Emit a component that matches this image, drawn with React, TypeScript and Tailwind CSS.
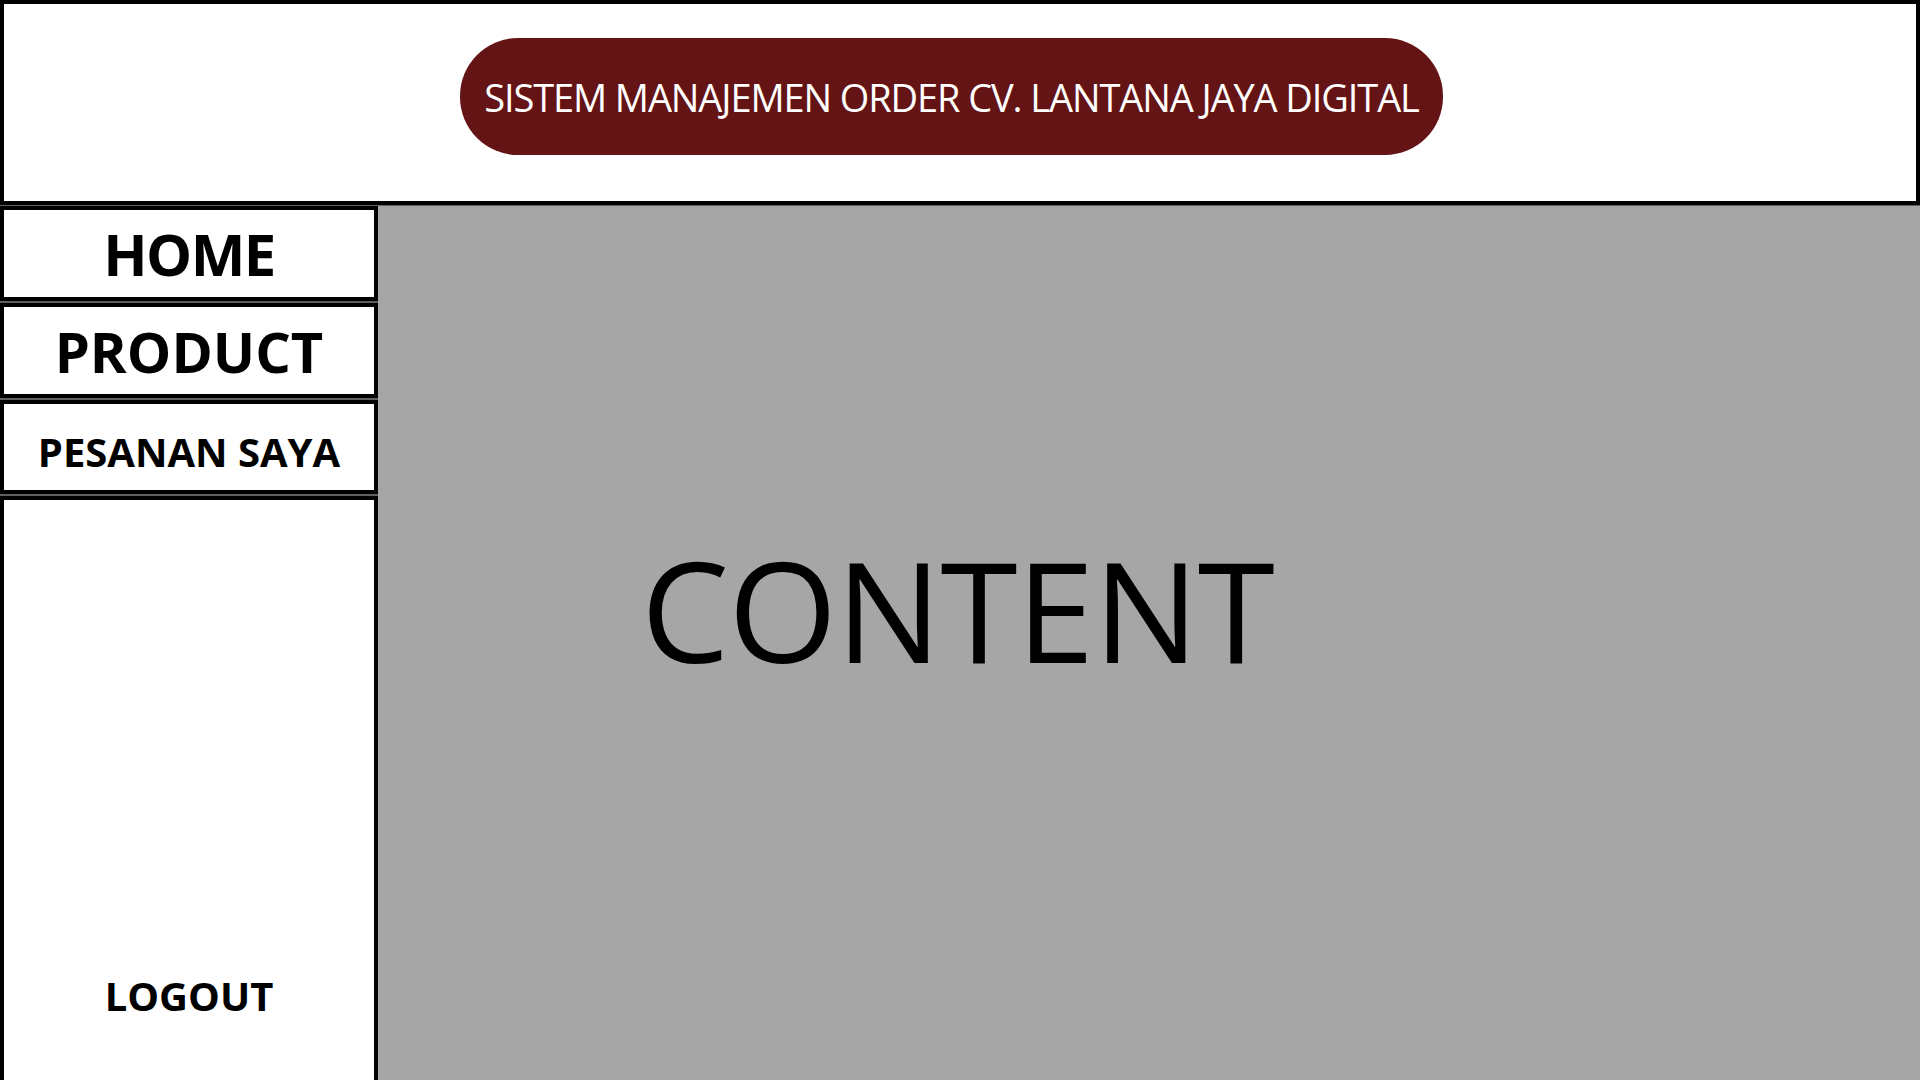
import React from "react";

const menu = [
    { label: "HOME", size: "text-[58px] tracking-[-1.5px]", h: "h-[95px]" },
    { label: "PRODUCT", size: "text-[56px]", h: "h-[95px]" },
    { label: "PESANAN SAYA", size: "text-[40px] pt-[10px]", h: "h-[94px]" },
];

export default function App() {
    return (
        <div className="flex h-[1080px] w-[1920px] flex-col overflow-hidden bg-[#5f5f5f] font-['Open_Sans',sans-serif]">
            {/* header */}
            <header className="h-[205px] shrink-0 border-4 border-black bg-white pl-[456px] pt-[34px]">
                <div className="flex h-[117px] w-[983px] items-center justify-center rounded-[58px] bg-[#651416]">
                    <span className="text-[38px] leading-none text-white tracking-[-1.1px]">
                        SISTEM MANAJEMEN ORDER CV. LANTANA JAYA DIGITAL
                    </span>
                </div>
            </header>

            <div className="flex flex-1 pt-px">
                {/* sidebar */}
                <aside className="flex w-[378px] shrink-0 flex-col gap-[2px]">
                    {menu.map((item) => (
                        <div
                            key={item.label}
                            className={`${item.h} flex items-center justify-center border-4 border-black bg-white`}
                        >
                            <span className={`${item.size} font-bold leading-none text-black`}>{item.label}</span>
                        </div>
                    ))}
                    <div className="flex flex-1 flex-col items-center justify-end border-x-4 border-t-4 border-black bg-white pb-[64px]">
                        <span className="text-[40px] font-bold leading-none text-black">LOGOUT</span>
                    </div>
                </aside>

                {/* content */}
                <main className="flex-1 bg-[#a6a6a6] pl-[263px] pt-[333px]">
                    <h1 className="text-[140px] leading-none tracking-[-1px] text-black">CONTENT</h1>
                </main>
            </div>
        </div>
    );
}
